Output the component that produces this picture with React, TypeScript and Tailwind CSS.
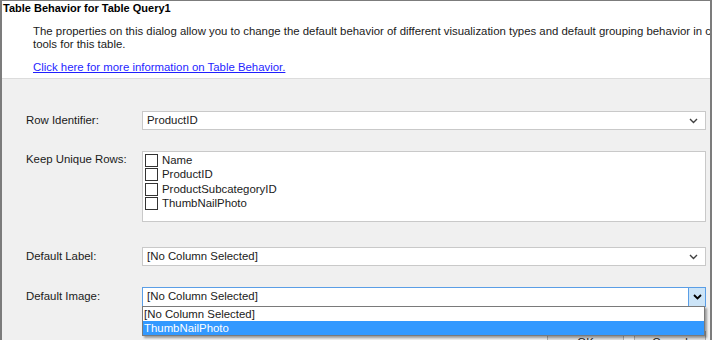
import React from 'react';

const font = "font-['Liberation_Sans',Arial,sans-serif]";

const Chevron: React.FC<{ bold?: boolean }> = ({ bold }) => (
  <svg width="9" height="6" viewBox="0 0 9 6" className="shrink-0">
    <path
      d="M1 1 L4.5 4.5 L8 1"
      fill="none"
      stroke={bold ? '#000' : '#404040'}
      strokeWidth={bold ? 1.8 : 1.4}
    />
  </svg>
);

const Combo: React.FC<{ value: string }> = ({ value }) => (
  <div className="flex items-center h-[19px] w-[564px] bg-white border border-[#c9c9c9] pl-[4px] pr-[7px]">
    <span className="flex-1 leading-none">{value}</span>
    <Chevron />
  </div>
);

const CheckItem: React.FC<{ name: string }> = ({ name }) => (
  <li className="flex items-center h-[14.5px] gap-[4px]">
    <span className="w-[13px] h-[13px] border border-[#333] bg-white" />
    <span className="leading-none">{name}</span>
  </li>
);

const FormRow: React.FC<{ label: string; className?: string; children: React.ReactNode }> = ({ label, className, children }) => (
  <div className={`flex ${className ?? ''}`}>
    <div className="w-[140px] pl-[24px] shrink-0 whitespace-nowrap">{label}</div>
    {children}
  </div>
);

const App: React.FC = () => {
  const columns = ['Name', 'ProductID', 'ProductSubcategoryID', 'ThumbNailPhoto'];
  return (
    <div className={`${font} text-[11.4px] text-[#1a1a1a] w-[712px] h-[340px] overflow-hidden relative bg-[#f0f0f0] border-t border-l-2 border-r-2 border-[#7c7c7c]`}>
      <div className="bg-white h-[78px] border-b border-[#dcdcdc] pt-[1px]">
        <div className="pl-[1px] text-[11px] font-bold text-black leading-[13px] whitespace-nowrap">Table Behavior for Table Query1</div>
        <p className="pl-[31px] mt-[10px] leading-[13px] whitespace-nowrap">
          The properties on this dialog allow you to change the default behavior of different visualization types and default grouping behavior in client
          <br />
          tools for this table.
        </p>
        <a href="#" className="block pl-[31px] mt-[10px] leading-[13px] text-[#1f1fff] underline whitespace-nowrap">
          Click here for more information on Table Behavior.
        </a>
      </div>

      <FormRow label="Row Identifier:" className="mt-[32px] items-center">
        <Combo value="ProductID" />
      </FormRow>

      <FormRow label="Keep Unique Rows:" className="mt-[21px] items-start">
        <div className="w-[564px] h-[71px] bg-white border border-[#c9c9c9] pl-[2px] pt-[1px]">
          <ul>
            {columns.map((c) => (
              <CheckItem key={c} name={c} />
            ))}
          </ul>
        </div>
      </FormRow>

      <FormRow label="Default Label:" className="mt-[25px] items-center">
        <Combo value="[No Column Selected]" />
      </FormRow>

      <FormRow label="Default Image:" className="mt-[21px] items-center">
        <div className="relative">
          <div className="flex items-center h-[20px] w-[564px] bg-white border border-[#5a9ee6] pl-[4px]">
            <span className="flex-1 leading-none">[No Column Selected]</span>
            <div className="w-[17px] h-full bg-[#cce4f7] border-l border-[#5a9ee6] flex items-center justify-center">
              <Chevron bold />
            </div>
          </div>
          <div className="absolute z-10 left-0 top-[19px] w-[563px] bg-white border border-[#7a7a7a] shadow-[2px_2px_2px_rgba(0,0,0,0.35)]">
            <div className="h-[14px] pl-[1px] leading-[14px]">[No Column Selected]</div>
            <div className="h-[14px] pl-[1px] leading-[14px] bg-[#3399ff] text-white">ThumbNailPhoto</div>
          </div>
        </div>
      </FormRow>

      <div className="flex justify-end gap-[10px] pr-[4px] mt-[24px]">
        <button className="w-[77px] h-[23px] bg-[#e1e1e1] border border-[#adadad]">OK</button>
        <button className="w-[72px] h-[23px] bg-[#e1e1e1] border border-[#adadad]">Cancel</button>
      </div>
    </div>
  );
};

export default App;
